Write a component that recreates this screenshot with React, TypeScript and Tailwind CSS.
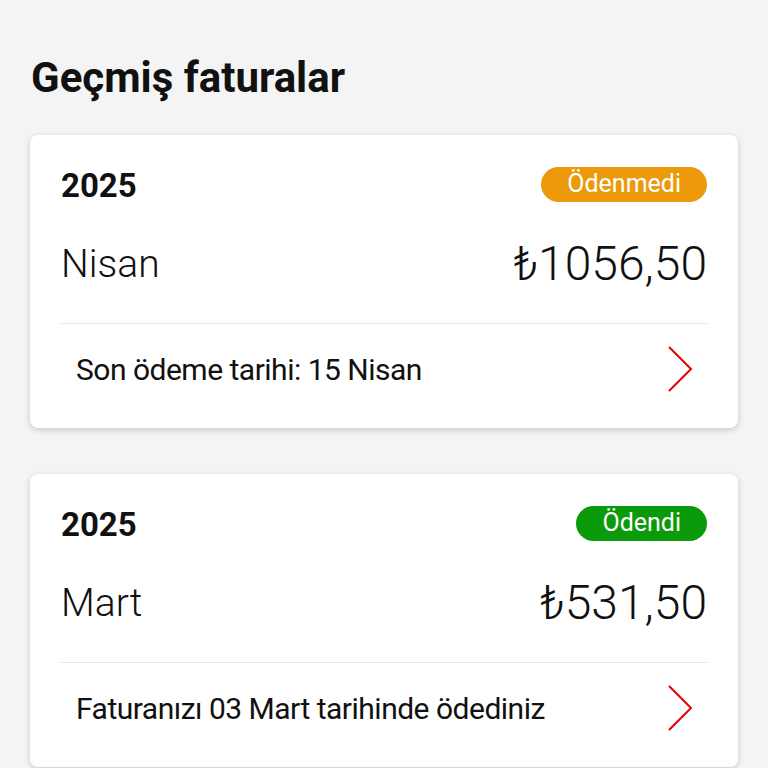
import React from "react";

type Bill = {
  year: string;
  month: string;
  amount: string;
  status: string;
  paid: boolean;
  note: string;
};

const bills: Bill[] = [
  {
    year: "2025",
    month: "Nisan",
    amount: "₺1056,50",
    status: "Ödenmedi",
    paid: false,
    note: "Son ödeme tarihi: 15 Nisan",
  },
  {
    year: "2025",
    month: "Mart",
    amount: "₺531,50",
    status: "Ödendi",
    paid: true,
    note: "Faturanızı 03 Mart tarihinde ödediniz",
  },
];

function Chevron() {
  return (
    <svg width="28" height="46" viewBox="0 0 28 46" fill="none" className="shrink-0">
      <path d="M3 1 L25 23 L3 45" stroke="#e60000" strokeWidth="2" strokeLinejoin="miter" />
    </svg>
  );
}

function BillCard({ bill }: { bill: Bill }) {
  return (
    <div className="bg-white rounded-lg shadow-[0_2px_6px_rgba(0,0,0,0.18)] h-[293px] flex flex-col">
      <div className="px-[31px] pt-[33px]">
        <div className="flex items-center justify-between h-[36px]">
          <span className="text-[33px] font-bold text-[#111]">{bill.year}</span>
          <span
            className={
              bill.paid
                ? "h-[35px] px-[26px] rounded-full bg-[#0a9a0a] text-white text-[25px] flex items-center -mt-[4px]"
                : "h-[35px] px-[26px] rounded-full bg-[#ec9a0b] text-white text-[25px] flex items-center -mt-[4px]"
            }
          >
            {bill.status}
          </span>
        </div>
        <div className="flex items-center justify-between mt-[35px] h-[50px]">
          <span className="text-[39px] font-light text-[#111]">{bill.month}</span>
          <span className="text-[48px] font-light text-[#111]">{bill.amount}</span>
        </div>
        <div className="mt-[34px] border-t border-[#e4e4e4]" />
      </div>
      <div className="flex-1 flex items-center justify-between pl-[46px] pr-[44px] pb-[14px]">
        <span className="text-[30px] text-[#111] tracking-[-0.5px]">{bill.note}</span>
        <Chevron />
      </div>
    </div>
  );
}

export default function App() {
  return (
    <div
      className="min-h-[768px] bg-[#f4f4f4] px-[30px] pt-[57px]"
      style={{ fontFamily: "Roboto, 'Open Sans', sans-serif" }}
    >
      <h1 className="text-[42px] font-bold text-[#111] leading-none pl-[1px] mb-[36px]">
        Geçmiş faturalar
      </h1>
      <div className="flex flex-col gap-[46px]">
        {bills.map((b) => (
          <BillCard key={b.month} bill={b} />
        ))}
      </div>
    </div>
  );
}
